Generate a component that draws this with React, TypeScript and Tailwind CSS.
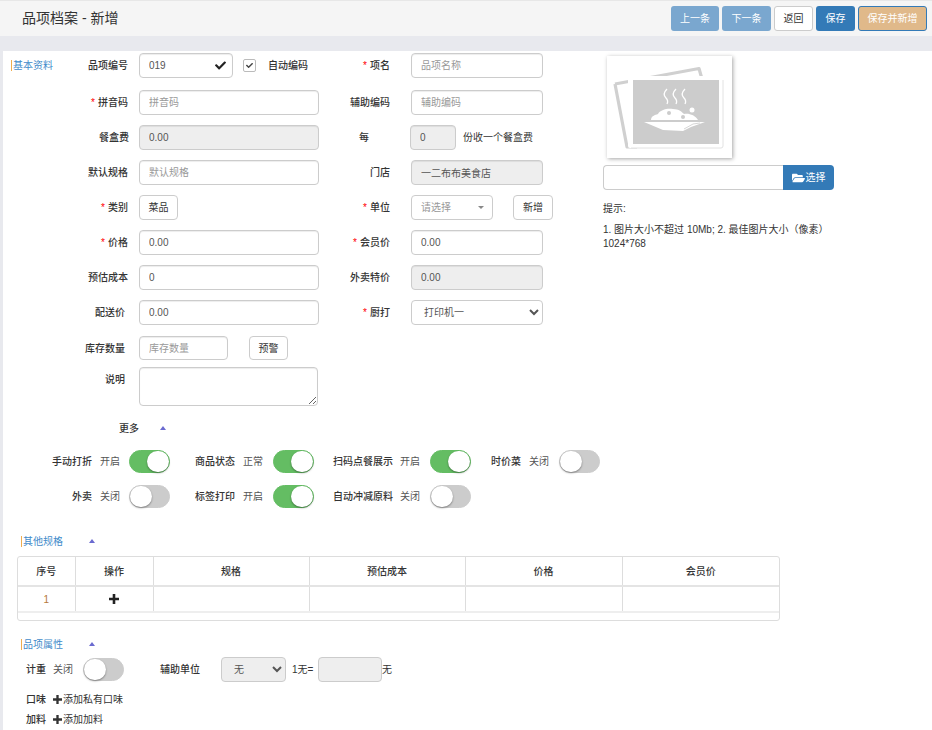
import React from 'react';
import { FaCheck, FaFolderOpen } from 'react-icons/fa';

const inputCls =
  'h-full rounded-[4px] border border-[#ccc] px-[9px] text-[10px] text-[#555] placeholder:text-[#999] shadow-[inset_0_1px_1px_rgba(0,0,0,0.075)] outline-none';
const disabledCls = 'bg-[#eee]';
const btnCls =
  'flex h-full items-center justify-center rounded-[4px] border border-[#ccc] bg-white text-[10px] text-[#333]';

const Label = ({ text, required, className }: { text: string; required?: boolean; className?: string }) => (
  <label className={`block whitespace-nowrap text-right text-[10px] font-medium text-[#333] ${className ?? ''}`}>
    {required && <span className="mr-[3px] text-[#f00]">*</span>}
    {text}
  </label>
);

const Toggle = ({ on }: { on?: boolean }) => (
  <span
    className={`relative block h-[23px] w-[41px] shrink-0 rounded-full border ${
      on ? 'border-[#64bd63] bg-[#64bd63]' : 'border-[#ccc] bg-[#ccc]'
    }`}
  >
    <span
      className={`absolute top-0 h-[21px] w-[22px] rounded-full bg-white shadow-[0_1px_2px_rgba(0,0,0,0.4)] ${
        on ? 'right-0' : 'left-0'
      }`}
    />
  </span>
);

const SwitchItem = ({
  label,
  value,
  on,
  w,
  valueGap = 'ml-[8px]',
  toggleGap = 'ml-[10px]',
}: {
  label: string;
  value: string;
  on?: boolean;
  w: string;
  valueGap?: string;
  toggleGap?: string;
}) => (
  <div className="flex h-[23px] items-center">
    <span className={`${w} whitespace-nowrap text-right text-[10px] font-medium text-[#333]`}>{label}</span>
    <span className={`${valueGap} w-[20px] whitespace-nowrap text-[10px] text-[#555]`}>{value}</span>
    <span className={toggleGap}>
      <Toggle on={on} />
    </span>
  </div>
);

const SectionTitle = ({ text, className }: { text: string; className?: string }) => (
  <span className={`block whitespace-nowrap border-l border-[#f0ad4e] pl-[1px] text-[10px] leading-[11px] text-[#428bca] ${className ?? ''}`}>
    {text}
  </span>
);

const Triangle = () => (
  <span className="block h-0 w-0 border-x-[3px] border-b-[4px] border-x-transparent border-b-[#6a6ad0]" />
);

// heavier than FaPlus at this size, closer to the glyphicon
const PlusIcon = ({ className }: { className?: string }) => (
  <svg viewBox="0 0 10 10" className={className} fill="currentColor">
    <path d="M3.7 0h2.6v3.7H10v2.6H6.3V10H3.7V6.3H0V3.7h3.7z" />
  </svg>
);

const Row = ({ children, className }: { children: React.ReactNode; className?: string }) => (
  <div className={`flex h-[25px] items-center ${className ?? ''}`}>{children}</div>
);

const FoodPlaceholder = () => (
  <svg viewBox="0 0 125 102" className="h-[102px] w-[125px]">
    <rect x="0" y="0" width="125" height="102" fill="#fff" />
    <path d="M8 28 L92 12.5 L95 23 M8 28 L20 91 L30 91" fill="none" stroke="#d0d0d0" strokeWidth="3.2" strokeLinejoin="round" />
    <rect x="21" y="20" width="95" height="72" rx="2" fill="#fff" />
    <path d="M116 24 V90 Q116 92 114 92 H24" fill="none" stroke="#e2e2e2" strokeWidth="1" />
    <rect x="26" y="24" width="86" height="64" fill="#ccc" />
    <path
      d="M60 33 C56 37 57 40 59 42 C61 44 61 46 60 48 M69 33 C65 37 66 40 68 42 C70 44 70 46 69 48 M78 33 C74 37 75 40 77 42 C79 44 79 46 78 48"
      fill="none"
      stroke="#fff"
      strokeWidth="1.3"
    />
    <path d="M44 64 C44 60 48 59 51 58 C53 54 60 52 66 53 C72 53 75 56 77 58 C82 57 88 59 91 64 Z" fill="#fff" />
    <path d="M37 66 L98 66 L84 71 L76 75 L56 74 Z" fill="#fff" />
    <path d="M77 73 L86 68 L93 67" fill="none" stroke="#ccc" strokeWidth="0.8" />
    <circle cx="62" cy="57" r="2" fill="#ccc" />
    <circle cx="76" cy="61" r="2" fill="#ccc" />
    <circle cx="85" cy="54" r="2.5" fill="#fff" />
  </svg>
);

const columns = [
  { name: '序号', w: 'w-[57px]' },
  { name: '操作', w: 'w-[78px]' },
  { name: '规格', w: 'w-[156px]' },
  { name: '预估成本', w: 'w-[156px]' },
  { name: '价格', w: 'w-[157px]' },
  { name: '会员价', w: 'w-[157px]' },
];

export default function App() {
  return (
    <div
      className="h-[730px] w-[932px] overflow-hidden bg-[#e8e9ee] text-[10px] text-[#333]"
      style={{ fontFamily: '"Liberation Sans", "Noto Sans CJK SC", sans-serif' }}
    >
      {/* top bar */}
      <div className="flex h-[36px] items-center justify-between border-t border-[#e7e7e7] bg-[#f5f5f5] pl-[22px] pr-[5px]">
        <h1 className="text-[14px] font-normal text-[#333]">品项档案 - 新增</h1>
        <div className="flex h-[25px] gap-[3px] text-[10px]">
          <button className="w-[48px] rounded-[3px] bg-[#7aa7cf] text-white">上一条</button>
          <button className="w-[49px] rounded-[3px] bg-[#7aa7cf] text-white">下一条</button>
          <button className="w-[39px] rounded-[3px] border border-[#ccc] bg-white text-[#333]">返回</button>
          <button className="w-[39px] rounded-[3px] bg-[#337ab7] text-white">保存</button>
          <button className="w-[69px] rounded-[3px] border border-[#337ab7] bg-[#e0b98a] text-white">保存并新增</button>
        </div>
      </div>

      <div className="ml-[3px] mt-[15px] h-[679px] bg-white">
        <div className="flex">
          {/* form */}
          <div className="w-[600px] pt-[2px]">
            <Row>
              <div className="flex w-[125px] items-center justify-between pl-[8px]">
                <SectionTitle text="基本资料" />
                <Label text="品项编号" />
              </div>
              <div className="relative ml-[11px] h-full w-[94px]">
                <input className={`${inputCls} w-full`} defaultValue="019" readOnly />
                <FaCheck className="absolute right-[7px] top-[7px] h-[11px] w-[11px] text-[#222]" />
              </div>
              <span className="ml-[10px] flex h-[13px] w-[13px] items-center justify-center rounded-[2px] border border-[#bbb] bg-white">
                <FaCheck className="h-[7px] w-[7px] text-[#444]" />
              </span>
              <span className="ml-[12px] w-[40px] whitespace-nowrap text-[10px] font-medium text-[#333]">自动编码</span>
              <Label text="项名" required className="w-[82px]" />
              <input className={`${inputCls} ml-[21px] w-[132px]`} placeholder="品项名称" readOnly />
            </Row>
            <Row className="mt-[12px]">
              <Label text="拼音码" required className="w-[125px]" />
              <input className={`${inputCls} ml-[11px] w-[180px]`} placeholder="拼音码" readOnly />
              <Label text="辅助编码" className="w-[71px]" />
              <input className={`${inputCls} ml-[21px] w-[132px]`} placeholder="辅助编码" readOnly />
            </Row>
            <Row className="mt-[10px]">
              <Label text="餐盒费" className="w-[126px]" />
              <input className={`${inputCls} ${disabledCls} ml-[10px] w-[180px]`} defaultValue="0.00" readOnly />
              <Label text="每" className="w-[50px]" />
              <input className={`${inputCls} ${disabledCls} ml-[41px] w-[46px]`} defaultValue="0" readOnly />
              <span className="ml-[7px] whitespace-nowrap text-[#333]">份收一个餐盒费</span>
            </Row>
            <Row className="mt-[10px]">
              <Label text="默认规格" className="w-[125px]" />
              <input className={`${inputCls} ml-[11px] w-[180px]`} placeholder="默认规格" readOnly />
              <Label text="门店" className="w-[71px]" />
              <input className={`${inputCls} ${disabledCls} ml-[21px] w-[132px]`} defaultValue="一二布布美食店" readOnly />
            </Row>
            <Row className="mt-[10px]">
              <Label text="类别" required className="w-[125px]" />
              <button className={`${btnCls} ml-[11px] w-[39px]`}>菜品</button>
              <Label text="单位" required className="w-[212px]" />
              <div className="ml-[21px] flex h-full w-[82px] items-center justify-between rounded-[4px] border border-[#ccc] pl-[9px] pr-[8px] text-[#999]">
                <span>请选择</span>
                <span className="h-0 w-0 border-x-[3px] border-t-[3px] border-x-transparent border-t-[#888]" />
              </div>
              <button className={`${btnCls} ml-[20px] w-[40px]`}>新增</button>
            </Row>
            <Row className="mt-[10px]">
              <Label text="价格" required className="w-[125px]" />
              <input className={`${inputCls} ml-[11px] w-[180px]`} defaultValue="0.00" readOnly />
              <Label text="会员价" required className="w-[71px]" />
              <input className={`${inputCls} ml-[21px] w-[132px]`} defaultValue="0.00" readOnly />
            </Row>
            <Row className="mt-[10px]">
              <Label text="预估成本" className="w-[125px]" />
              <input className={`${inputCls} ml-[11px] w-[180px]`} defaultValue="0" readOnly />
              <Label text="外卖特价" className="w-[71px]" />
              <input className={`${inputCls} ${disabledCls} ml-[21px] w-[132px]`} defaultValue="0.00" readOnly />
            </Row>
            <Row className="mt-[10px]">
              <Label text="配送价" className="w-[122px]" />
              <input className={`${inputCls} ml-[14px] w-[180px]`} defaultValue="0.00" readOnly />
              <Label text="厨打" required className="w-[71px]" />
              <select className="ml-[21px] h-full w-[132px] rounded-[4px] border border-[#ccc] bg-white pl-[8px] text-[10px] text-[#555]">
                <option>打印机一</option>
              </select>
            </Row>
            <div className="mt-[11px] flex h-[24px] items-center">
              <Label text="库存数量" className="w-[122px]" />
              <input className={`${inputCls} ml-[14px] w-[89px]`} placeholder="库存数量" readOnly />
              <button className={`${btnCls} ml-[21px] w-[39px]`}>预警</button>
            </div>
            <div className="mt-[7px] flex">
              <Label text="说明" className="w-[122px] pt-[5px]" />
              <textarea
                className="ml-[14px] block h-[39px] w-[179px] rounded-[4px] border border-[#ccc] shadow-[inset_0_1px_1px_rgba(0,0,0,0.075)] outline-none"
                readOnly
              />
            </div>
            <div className="mt-[16px] flex h-[12px] items-center">
              <span className="w-[136px] text-right font-medium text-[#333]">更多</span>
              <span className="ml-[21px]">
                <Triangle />
              </span>
            </div>
            <div className="mt-[16px] flex">
              <SwitchItem label="手动打折" value="开启" on w="w-[89px]" toggleGap="ml-[9px]" />
              <SwitchItem label="商品状态" value="正常" on w="w-[65px]" />
              <SwitchItem label="扫码点餐展示" value="开启" on w="w-[79px]" valueGap="ml-[7px]" />
              <SwitchItem label="时价菜" value="关闭" w="w-[50px]" />
            </div>
            <div className="mt-[12px] flex">
              <SwitchItem label="外卖" value="关闭" w="w-[89px]" toggleGap="ml-[9px]" />
              <SwitchItem label="标签打印" value="开启" on w="w-[65px]" />
              <SwitchItem label="自动冲减原料" value="关闭" w="w-[79px]" valueGap="ml-[7px]" />
            </div>
          </div>

          {/* picture */}
          <div className="w-[231px] pt-[5px]">
            <div className="ml-[4px] w-[125px] shadow-[1px_1px_4px_rgba(0,0,0,0.35)]">
              <FoodPlaceholder />
            </div>
            <div className="mt-[7px] flex h-[25px]">
              <div className="w-[180px] rounded-l-[4px] border border-r-0 border-[#ccc] bg-white" />
              <button className="flex w-[51px] items-center justify-center gap-[1px] rounded-r-[4px] bg-[#337ab7] text-white">
                <FaFolderOpen className="h-[12px] w-[13px]" />
                选择
              </button>
            </div>
            <p className="mt-[12px] leading-[14px] text-[#333]">提示:</p>
            <p className="mt-[7px] w-[231px] leading-[14px] text-[#333]">1. 图片大小不超过 10Mb; 2. 最佳图片大小（像素）1024*768</p>
          </div>
        </div>

        {/* other specs */}
        <div className="ml-[18px] mt-[27px] flex h-[12px] items-center">
          <SectionTitle text="其他规格" />
          <span className="ml-[26px]">
            <Triangle />
          </span>
        </div>
        <div className="ml-[14px] mt-[9px] h-[65px] w-[763px] rounded-[3px] border border-[#ddd]">
          <table className="w-full table-fixed border-collapse text-[10px]">
            <thead>
              <tr className="h-[29px] border-b-2 border-[#e4e4e4]">
                {columns.map((c, i) => (
                  <th key={c.name} className={`${c.w} font-medium text-[#333] ${i > 0 ? 'border-l border-[#ddd]' : ''}`}>
                    {c.name}
                  </th>
                ))}
              </tr>
            </thead>
            <tbody>
              <tr className="h-[26px] border-b-2 border-[#eee]">
                <td className="text-center text-[#b5793c]">1</td>
                <td className="border-l border-[#ddd]">
                  <PlusIcon className="mx-auto h-[10px] w-[10px] text-[#222]" />
                </td>
                <td className="border-l border-[#ddd]" />
                <td className="border-l border-[#ddd]" />
                <td className="border-l border-[#ddd]" />
                <td className="border-l border-[#ddd]" />
              </tr>
            </tbody>
          </table>
        </div>

        {/* item attributes */}
        <div className="ml-[18px] mt-[17px] flex h-[12px] items-center">
          <SectionTitle text="品项属性" />
          <span className="ml-[26px]">
            <Triangle />
          </span>
        </div>
        <div className="ml-[23px] mt-[7px] flex h-[25px] items-center">
          <span className="w-[20px] whitespace-nowrap font-medium text-[#333]">计重</span>
          <span className="ml-[7px] w-[20px] whitespace-nowrap text-[#555]">关闭</span>
          <span className="ml-[10px]">
            <Toggle />
          </span>
          <span className="ml-[36px] w-[40px] whitespace-nowrap font-medium text-[#333]">辅助单位</span>
          <select className="ml-[21px] h-full w-[65px] rounded-[4px] border border-[#ccc] bg-[#eee] pl-[8px] text-[10px] text-[#555]">
            <option>无</option>
          </select>
          <span className="ml-[6px] w-[26px] whitespace-nowrap text-[#333]">1无=</span>
          <span className="h-full w-[64px] rounded-[4px] border border-[#ccc] bg-[#eee]" />
          <span className="text-[#333]">无</span>
        </div>
        <div className="ml-[23px] mt-[10px] flex h-[14px] items-center">
          <span className="w-[27px] font-medium text-[#333]">口味</span>
          <PlusIcon className="h-[9px] w-[9px] text-[#333]" />
          <span className="ml-[1px] text-[#333]">添加私有口味</span>
        </div>
        <div className="ml-[23px] mt-[6px] flex h-[14px] items-center">
          <span className="w-[27px] font-medium text-[#333]">加料</span>
          <PlusIcon className="h-[9px] w-[9px] text-[#333]" />
          <span className="ml-[1px] text-[#333]">添加加料</span>
        </div>
      </div>
    </div>
  );
}
